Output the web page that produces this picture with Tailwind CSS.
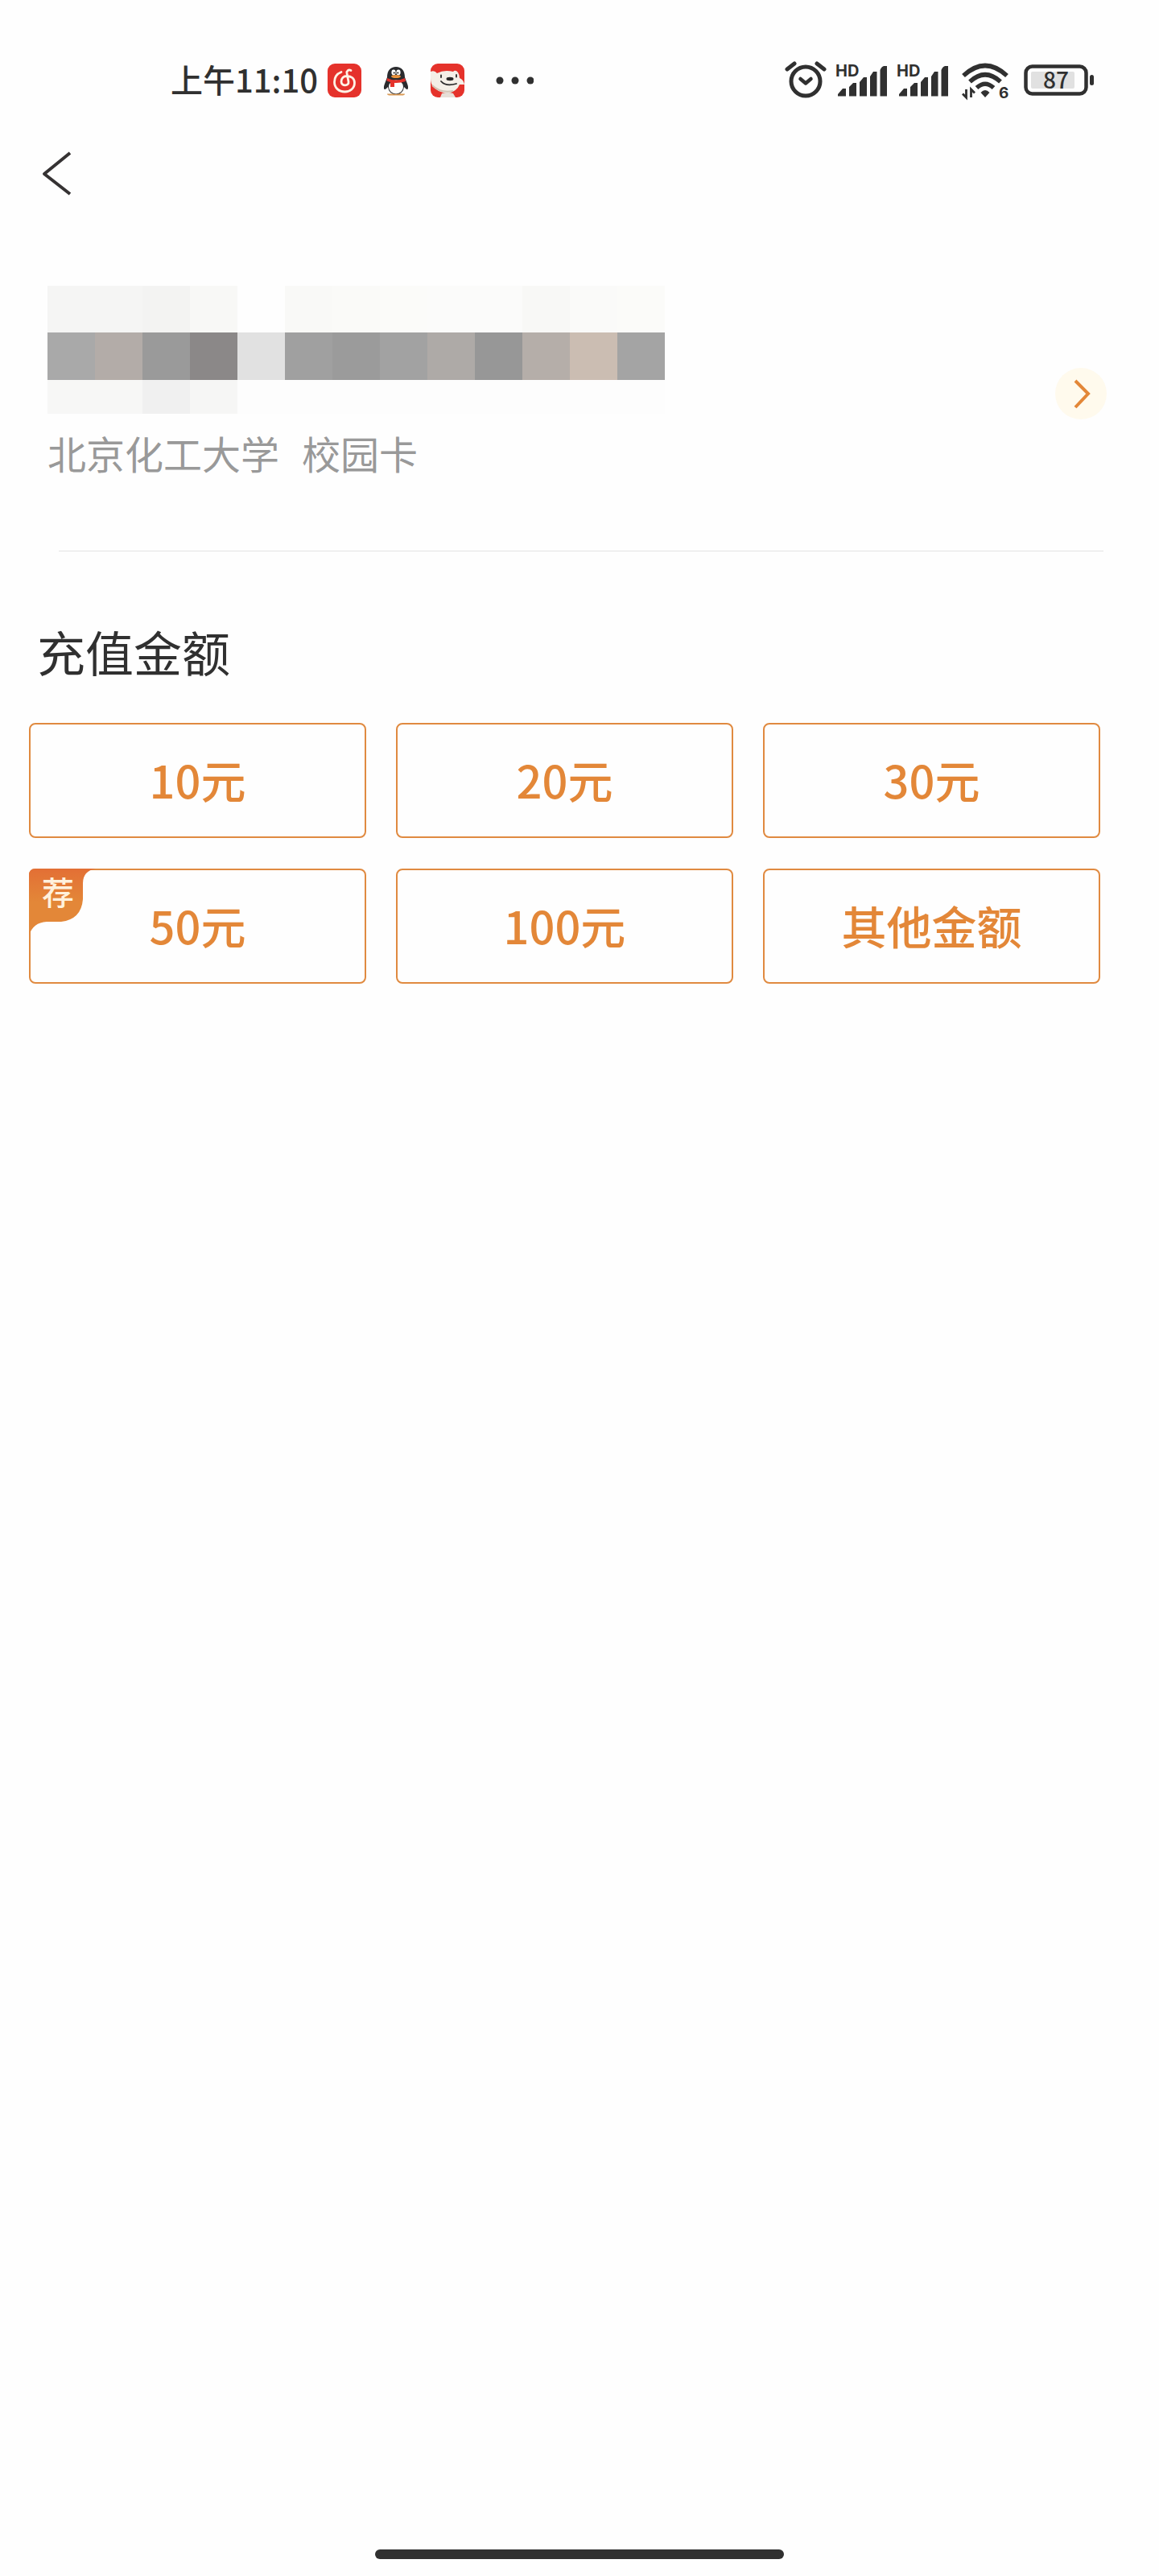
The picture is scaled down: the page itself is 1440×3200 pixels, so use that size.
<!DOCTYPE html>
<html lang="zh-CN">
<head>
<meta charset="utf-8">
<meta name="viewport" content="width=device-width, initial-scale=1">
<title>校园卡充值</title>
<script src="https://cdn.jsdelivr.net/npm/@tailwindcss/browser@4"></script>
</head>
<body class="flex min-h-screen flex-col bg-[#fefefe] font-['Noto_Sans_CJK_SC',sans-serif] text-[#303030]">

<!-- status bar -->
<div class="flex h-[124px] items-end justify-between pr-20 pl-[212px]">
  <div class="flex h-12 items-center gap-[22px]">
    <div class="flex items-center gap-3">
      <span class="pb-1 text-[40px] leading-[48px] font-medium whitespace-nowrap">上午11:10</span>
      <svg class="size-[42px]" viewBox="0 0 42 42" aria-hidden="true">
        <rect width="42" height="42" rx="9" fill="#e5322b"/>
        <path d="M29 8.500C26 7 23.500 9 24 12L26 22.500C27 28 17 28.500 17 22.500C17 18 20 15.500 24 15.500C30 15.500 33.500 19 33.500 24C33.500 30.500 28 35 21.500 35C14 35 8.500 30 8.500 23C8.500 17 12 12.500 17 10.500" fill="none" stroke="#fff3e6" stroke-width="2.800" stroke-linecap="round"/>
      </svg>
    </div>
    <svg class="size-[42px]" viewBox="0 0 42 42" aria-hidden="true">
      <path d="M10 37.500H17L20 35L24 35L27 37.500H32Q32 39.500 28 39.500H14Q10 39.500 10 37.500Z" fill="#d99a55"/>
      <path d="M10 17C10 9 14 4 21 4S32 9 32 17L35 25C37 30 36 34 33 31L31 29Q30 38 21 38T11 29L9 31C6 34 5 30 7 25Z" fill="#2a2b2e"/>
      <ellipse cx="21" cy="29" rx="9" ry="8.500" fill="#fefefe"/>
      <ellipse cx="18" cy="11" rx="2.600" ry="3.400" fill="#fff"/><ellipse cx="24" cy="11" rx="2.600" ry="3.400" fill="#fff"/>
      <circle cx="18.700" cy="11.500" r="1.100" fill="#222"/><circle cx="23.300" cy="11.500" r="1.100" fill="#222"/>
      <ellipse cx="21" cy="16" rx="6" ry="2" fill="#e8913b"/>
      <path d="M10 18Q21 23 32 18L33 22Q26 24.500 19 24V29H14V23L9.500 21.500Z" fill="#e5322b"/>
    </svg>
    <svg class="size-[42px]" viewBox="0 0 42 42" aria-hidden="true">
      <rect width="42" height="42" rx="9" fill="#e5322b"/>
      <path d="M0 10Q5 8 8 12Q17 7 28 10Q31 7 34 11Q36 14 36 18Q41 20 42 26L36 26Q33 34 22 37Q8 36 2 27Q0 24 0 18Z" fill="#f4efe7"/>
      <path d="M12 42L14 37Q22 35 28 37L31 42Z" fill="#e6dfd7"/>
      <path d="M2 27Q12 37 28 34" fill="none" stroke="#d2c4b5" stroke-width="2"/>
      <ellipse cx="24" cy="19" rx="4.500" ry="2.200" fill="#292929"/>
      <path d="M13 14.500V17M32 14V16.500M13 22Q19 29 32 25" fill="none" stroke="#292929" stroke-width="1.800" stroke-linecap="round"/>
    </svg>
    <svg class="ml-4 h-3 w-12" viewBox="0 0 48 12" fill="#303030" aria-hidden="true"><circle cx="6" cy="6" r="4.500"/><circle cx="25" cy="6" r="4.500"/><circle cx="44" cy="6" r="4.500"/></svg>
  </div>

  <div class="flex h-12 items-center gap-2.5">
    <svg class="h-12 w-[52px]" viewBox="0 0 52 48" fill="none" stroke="#303030" aria-hidden="true">
      <circle cx="26" cy="25" r="18" stroke-width="5"/>
      <path d="M3 10L12 3M40 3L49 10" stroke-width="5" stroke-linecap="round"/>
      <path d="M19.500 22L26 27.500L32.500 22" stroke-width="4.500" stroke-linecap="round" stroke-linejoin="round"/>
    </svg>
    <svg class="h-12 w-[66px] overflow-visible font-['Inter',sans-serif]" viewBox="0 0 66 48" fill="#303030" aria-hidden="true">
      <text x="1" y="19" font-size="20" font-weight="700">HD</text>
      <path d="M4 41L10 34H14V43.500H4ZM18 32L23 27H27V43.500H18ZM31 26L36 20H40V43.500H31ZM44 19L48 13H52.500V43.500H44ZM56.500 11Q58 7 61 6H65V43.500H56.500Z"/>
    </svg>
    <svg class="h-12 w-[66px] overflow-visible font-['Inter',sans-serif]" viewBox="0 0 66 48" fill="#303030" aria-hidden="true">
      <text x="1" y="19" font-size="20" font-weight="700">HD</text>
      <path d="M4 41L10 34H14V43.500H4ZM18 32L23 27H27V43.500H18ZM31 26L36 20H40V43.500H31ZM44 19L48 13H52.500V43.500H44ZM56.500 11Q58 7 61 6H65V43.500H56.500Z"/>
    </svg>
    <svg class="h-12 w-[72px] overflow-visible font-['Inter',sans-serif]" viewBox="0 0 72 48" fill="none" stroke="#303030" aria-hidden="true">
      <path d="M8 18Q35 -7 62 18M16 25.500Q35 8 54 25.500M24.500 33Q35 23.500 45.500 33" stroke-width="5.500"/>
      <path d="M29.500 39Q35 33 40.500 39L35 45Z" fill="#303030" stroke="none"/>
      <path d="M11.500 35V45L7 40.500M17.500 45V35L22 39.500" stroke-width="2.800"/>
      <text x="52" y="46" font-size="19" font-weight="700" fill="#303030" stroke="none">6</text>
    </svg>
    <svg class="h-12 w-[89px]" viewBox="0 0 89 48" aria-hidden="true">
      <rect x="3.500" y="6.500" width="75" height="34" rx="8" fill="none" stroke="#303030" stroke-width="4.500"/>
      <rect x="10" y="13" width="54" height="21" rx="2" fill="#e1e1e1"/>
      <rect x="83" y="17" width="5" height="13" rx="2.500" fill="#303030"/>
      <text x="41" y="33.500" text-anchor="middle" font-size="28" font-weight="500" fill="#303030">87</text>
    </svg>
  </div>
</div>

<header class="flex h-[183px] items-center px-[49px]">
  <button type="button" aria-label="返回" class="h-[60px] w-10">
    <svg viewBox="0 0 40 60" fill="none" stroke="#353233" stroke-width="4" aria-hidden="true"><path d="M38 4L6 30L38 55" stroke-linejoin="round"/></svg>
  </button>
</header>

<main class="pr-[37px]">
  <!-- card holder, name and number masked -->
  <section class="mt-12 flex items-end justify-between pr-[28px] pl-[59px]">
    <div>
      <div class="grid w-[767px] grid-cols-13 grid-rows-[58px_59px_42px]" aria-label="已隐藏的持卡人信息">
        <i class="bg-[#f5f5f4]"></i><i class="bg-[#f5f5f4]"></i><i class="bg-[#f3f3f2]"></i><i class="bg-[#f8f8f6]"></i><i></i><i class="bg-[#f9f9f7]"></i><i class="bg-[#fafaf8]"></i><i class="bg-[#fbfbf9]"></i><i class="bg-[#fbfbfa]"></i><i class="bg-[#fbfbfa]"></i><i class="bg-[#f8f8f6]"></i><i class="bg-[#fafaf9]"></i><i class="bg-[#fbfbf9]"></i>
        <i class="bg-[#a9a9a9]"></i><i class="bg-[#b3aca8]"></i><i class="bg-[#9a9a9a]"></i><i class="bg-[#8b8888]"></i><i class="bg-[#e1e1e1]"></i><i class="bg-[#a0a0a0]"></i><i class="bg-[#9b9b9b]"></i><i class="bg-[#a2a2a2]"></i><i class="bg-[#aeaaa7]"></i><i class="bg-[#979797]"></i><i class="bg-[#b5aea9]"></i><i class="bg-[#cbbdb2]"></i><i class="bg-[#a4a4a4]"></i>
        <i class="bg-[#f7f7f6]"></i><i class="bg-[#f7f7f6]"></i><i class="bg-[#f0f0f0]"></i><i class="bg-[#f6f6f5]"></i><i class="col-span-9 bg-[#fdfdfd]"></i>
      </div>
      <p class="mt-3 flex gap-7 text-[48px] leading-[72px] text-[#999]"><span>北京化工大学</span><span>校园卡</span></p>
    </div>
    <button type="button" aria-label="切换校园卡" class="mb-[77px] size-16 rounded-full bg-[#fffaed]">
      <svg viewBox="0 0 64 64" fill="none" stroke="#e38738" stroke-width="4" aria-hidden="true"><path d="M25 16L41 32L25 49"/></svg>
    </button>
  </section>

  <hr class="mt-[86px] mr-8 ml-[73px] border-t border-[#e3e3e3]">

  <section class="px-9">
    <h1 class="mt-20 pl-2.5 text-[60px] leading-[88px]">充值金额</h1>
    <div class="mt-[45px] grid grid-cols-3 gap-x-[37px] gap-y-[38px] text-[56px] leading-[64px] font-medium text-[#e38738]">
      <button type="button" class="h-[143px] rounded-lg border-2 border-[#e08a40] pb-1">10元</button>
      <button type="button" class="h-[143px] rounded-lg border-2 border-[#e08a40] pb-1">20元</button>
      <button type="button" class="h-[143px] rounded-lg border-2 border-[#e08a40] pb-1">30元</button>
      <button type="button" class="relative h-[143px] rounded-lg border-2 border-[#e08a40] pb-1">
        <span class="absolute -top-0.5 -left-0.5 h-[84px] w-[84px]">
          <svg class="absolute inset-0" viewBox="0 0 84 84" aria-hidden="true">
            <defs><linearGradient id="badge" x2="0" y2="1"><stop offset="0" stop-color="#e36f35"/><stop offset=".5" stop-color="#e38738"/></linearGradient></defs>
            <path d="M0 8Q0 0 8 0H83Q67 3 67 18V38Q65 63 40 66H22Q5 67 0 83Z" fill="url(#badge)"/>
          </svg>
          <span class="absolute top-1 left-4 text-[40px] leading-[48px] text-[#fff1dc]">荐</span>
        </span>
        50元
      </button>
      <button type="button" class="h-[143px] rounded-lg border-2 border-[#e08a40] pb-1">100元</button>
      <button type="button" class="h-[143px] rounded-lg border-2 border-[#e08a40] pb-1">其他金额</button>
    </div>
  </section>
</main>

<!-- gesture bar -->
<div class="mx-auto mt-auto mb-[21px] h-3 w-[508px] rounded-full bg-[#303030]"></div>
</body>
</html>
